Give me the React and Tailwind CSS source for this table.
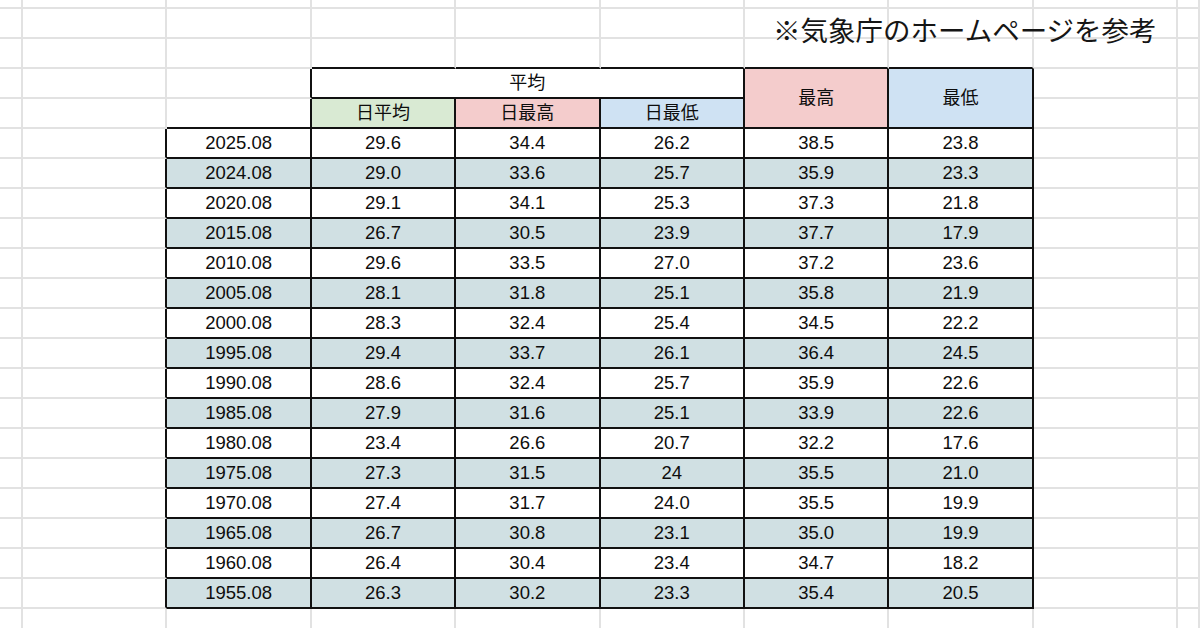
import React from "react";

const rows = [
  ["2025.08", "29.6", "34.4", "26.2", "38.5", "23.8"],
  ["2024.08", "29.0", "33.6", "25.7", "35.9", "23.3"],
  ["2020.08", "29.1", "34.1", "25.3", "37.3", "21.8"],
  ["2015.08", "26.7", "30.5", "23.9", "37.7", "17.9"],
  ["2010.08", "29.6", "33.5", "27.0", "37.2", "23.6"],
  ["2005.08", "28.1", "31.8", "25.1", "35.8", "21.9"],
  ["2000.08", "28.3", "32.4", "25.4", "34.5", "22.2"],
  ["1995.08", "29.4", "33.7", "26.1", "36.4", "24.5"],
  ["1990.08", "28.6", "32.4", "25.7", "35.9", "22.6"],
  ["1985.08", "27.9", "31.6", "25.1", "33.9", "22.6"],
  ["1980.08", "23.4", "26.6", "20.7", "32.2", "17.6"],
  ["1975.08", "27.3", "31.5", "24", "35.5", "21.0"],
  ["1970.08", "27.4", "31.7", "24.0", "35.5", "19.9"],
  ["1965.08", "26.7", "30.8", "23.1", "35.0", "19.9"],
  ["1960.08", "26.4", "30.4", "23.4", "34.7", "18.2"],
  ["1955.08", "26.3", "30.2", "23.3", "35.4", "20.5"],
];

const ROWS = 22;
const COLS = 10;

// rows: 0 partial, 1 title, 2 blank, 3-4 header, 5-20 data, 21 bottom
function inTable(r, c) {
  if (r >= 3 && r <= 4 && c >= 3 && c <= 7) return true;
  if (r >= 5 && r <= 20 && c >= 2 && c <= 7) return true;
  return false;
}

const headFill = {
  3: "bg-[#d9ead3]",
  4: "bg-[#f4cccc]",
  5: "bg-[#cfe2f3]",
};

function Cell({ r, c, rEnd = r, cEnd = c, className = "", children }) {
  const right = inTable(r, cEnd) || inTable(r, cEnd + 1);
  const bottom = inTable(rEnd, c) || inTable(rEnd + 1, c);
  return (
    <div
      className={`flex items-center justify-center border-r-2 border-b-2 whitespace-nowrap ${
        right ? "border-r-[#111]" : "border-r-[#e2e2e2]"
      } ${bottom ? "border-b-[#111]" : "border-b-[#e2e2e2]"} ${className}`}
    >
      {children}
    </div>
  );
}

export default function App() {
  const cells = [];
  for (let r = 0; r < ROWS; r++) {
    for (let c = 0; c < COLS; c++) {
      const key = `${r}-${c}`;
      if (r === 1 && c === 6) {
        cells.push(
          <Cell key={key} r={r} c={c} className="!justify-start !items-start">
            <div className="relative z-10 mt-[9px] pl-[28px] text-[27.5px] leading-none text-[#151515]">
              ※気象庁のホームページを参考
            </div>
          </Cell>
        );
        continue;
      }
      if (r === 3) {
        if (c === 3) {
          cells.push(
            <Cell key={key} r={3} c={3} cEnd={5} className="col-span-3 text-[18px]">
              平均
            </Cell>
          );
          continue;
        }
        if (c === 4 || c === 5) continue;
        if (c === 6) {
          cells.push(
            <Cell key={key} r={3} rEnd={4} c={6} className="row-span-2 bg-[#f4cccc] text-[18px]">
              最高
            </Cell>
          );
          continue;
        }
        if (c === 7) {
          cells.push(
            <Cell key={key} r={3} rEnd={4} c={7} className="row-span-2 bg-[#cfe2f3] text-[18px]">
              最低
            </Cell>
          );
          continue;
        }
      }
      if (r === 4) {
        if (c === 6 || c === 7) continue;
        if (c >= 3 && c <= 5) {
          const label = ["日平均", "日最高", "日最低"][c - 3];
          cells.push(
            <Cell key={key} r={r} c={c} className={`${headFill[c]} text-[18px]`}>
              {label}
            </Cell>
          );
          continue;
        }
      }
      if (r >= 5 && r <= 20 && c >= 2 && c <= 7) {
        const i = r - 5;
        const shade = i % 2 === 1 ? "bg-[#d0e0e3]" : "bg-white";
        cells.push(
          <Cell key={key} r={r} c={c} className={`${shade} text-[18.5px]`}>
            {rows[i][c - 2]}
          </Cell>
        );
        continue;
      }
      cells.push(<Cell key={key} r={r} c={c} />);
    }
  }

  return (
    <div
      className="w-[1200px] h-[628px] overflow-hidden bg-white text-[#0d0d0d]"
      style={{ fontFamily: '"Liberation Sans", "Noto Sans CJK JP", Arial, sans-serif' }}
    >
      <div className="grid grid-cols-[23px_repeat(8,144.4px)_1fr] grid-rows-[9px_repeat(21,30px)]">
        {cells}
      </div>
    </div>
  );
}
